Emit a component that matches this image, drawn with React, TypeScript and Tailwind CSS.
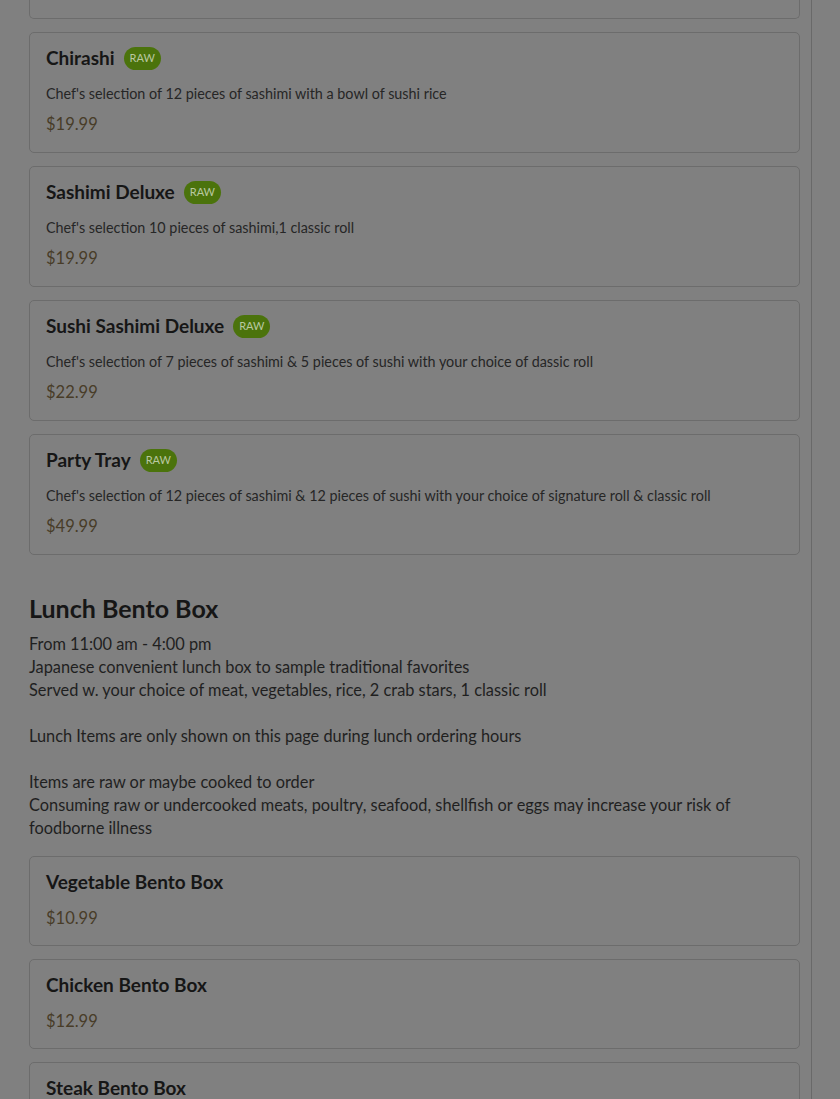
const rawItems = [
  {
    name: 'Chirashi',
    desc: "Chef's selection of 12 pieces of sashimi with a bowl of sushi rice",
    price: '$19.99',
  },
  {
    name: 'Sashimi Deluxe',
    desc: "Chef's selection 10 pieces of sashimi,1 classic roll",
    price: '$19.99',
  },
  {
    name: 'Sushi Sashimi Deluxe',
    desc: "Chef's selection of 7 pieces of sashimi & 5 pieces of sushi with your choice of dassic roll",
    price: '$22.99',
  },
  {
    name: 'Party Tray',
    desc: "Chef's selection of 12 pieces of sashimi & 12 pieces of sushi with your choice of signature roll & classic roll",
    price: '$49.99',
  },
];

const bentoItems = [
  { name: 'Vegetable Bento Box', price: '$10.99' },
  { name: 'Chicken Bento Box', price: '$12.99' },
  { name: 'Steak Bento Box', price: '$14.99' },
];

function RawBadge() {
  return (
    <span className="ml-[9px] inline-flex h-[23px] items-center rounded-full bg-[#4b730c] px-[6px] text-[11px] font-normal text-[#b9c8a0]">
      RAW
    </span>
  );
}

export default function App() {
  return (
    <div
      className="h-[1099px] overflow-hidden bg-[#808080] text-[#1a1a1a]"
      style={{ fontFamily: 'Lato, "Noto Sans", sans-serif' }}
    >
      <div className="h-full w-[812px] border-r border-[#696969] pl-[29px] pr-[11px]">
        <div className="h-[19px] rounded-b-[5px] border-x border-b border-[#6c6c6c]" />

        <div className="mt-[13px] flex flex-col gap-[13px]">
          {rawItems.map(item => (
            <div key={item.name} className="h-[121px] rounded-[5px] border border-[#6c6c6c] px-4 pt-[13px]">
              <div className="flex h-[24px] items-center">
                <h3 className="text-[19px] font-bold text-[#161616]">{item.name}</h3>
                <RawBadge />
              </div>
              <p className="mt-[15px] text-[14.35px] leading-[18px] text-[#262626]">{item.desc}</p>
              <p className="mt-[11px] text-[16.5px] leading-[20px] text-[#483c28]">{item.price}</p>
            </div>
          ))}
        </div>

        <h2 className="mt-[38px] text-[25px] font-bold leading-[30px] text-[#161616]">Lunch Bento Box</h2>
        <div className="mt-[9px] text-[16.35px] leading-[23px] text-[#1f1f1f]">
          <p>From 11:00 am - 4:00 pm</p>
          <p>Japanese convenient lunch box to sample traditional favorites</p>
          <p>Served w. your choice of meat, vegetables, rice, 2 crab stars, 1 classic roll</p>
          <p className="mt-[23px]">Lunch Items are only shown on this page during lunch ordering hours</p>
          <p className="mt-[23px]">Items are raw or maybe cooked to order</p>
          <p>Consuming raw or undercooked meats, poultry, seafood, shellfish or eggs may increase your risk of foodborne illness</p>
        </div>

        <div className="mt-[17px] flex flex-col gap-[13px]">
          {bentoItems.map(item => (
            <div key={item.name} className="h-[90px] rounded-[5px] border border-[#6c6c6c] px-4 pt-[13px]">
              <h3 className="flex h-[24px] items-center text-[19px] font-bold text-[#161616]">{item.name}</h3>
              <p className="mt-[14px] text-[16.5px] leading-[20px] text-[#483c28]">{item.price}</p>
            </div>
          ))}
        </div>
      </div>
    </div>
  );
}
